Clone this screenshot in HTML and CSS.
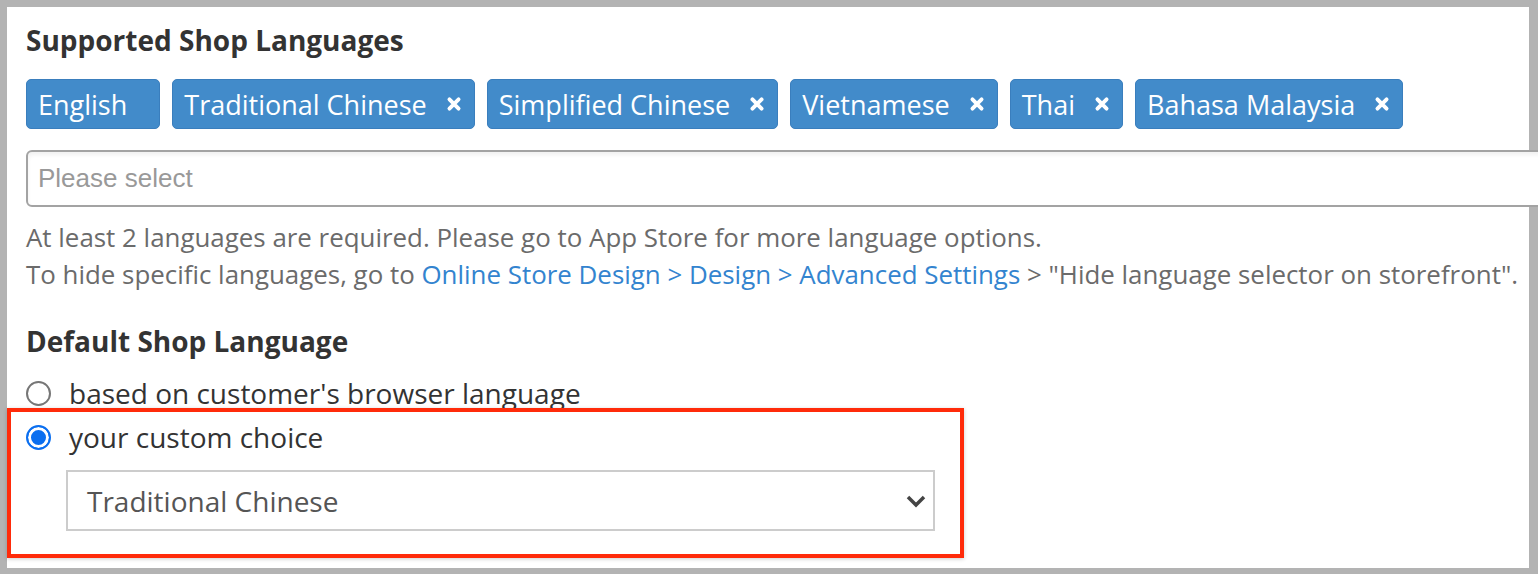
FILE: index.html
```html
<!DOCTYPE html>
<html lang="en">
<head>
    <meta charset="UTF-8">
    <meta name="viewport" content="width=device-width, initial-scale=1.0">
    <title>Shop Languages</title>
    <link rel="stylesheet" href="styles.css">
</head>
<body>

    <div class="panel">
        <!-- Supported languages -->
        <h3 class="section-title">Supported Shop Languages</h3>
        <div class="tag-list">
            <span class="tag tag-fixed">English</span>
            <span class="tag">Traditional Chinese <span class="tag-remove"><svg viewBox="0 0 14 14"><path d="M3 3 L11 11 M11 3 L3 11"/></svg></span></span>
            <span class="tag">Simplified Chinese <span class="tag-remove"><svg viewBox="0 0 14 14"><path d="M3 3 L11 11 M11 3 L3 11"/></svg></span></span>
            <span class="tag">Vietnamese <span class="tag-remove"><svg viewBox="0 0 14 14"><path d="M3 3 L11 11 M11 3 L3 11"/></svg></span></span>
            <span class="tag">Thai <span class="tag-remove"><svg viewBox="0 0 14 14"><path d="M3 3 L11 11 M11 3 L3 11"/></svg></span></span>
            <span class="tag">Bahasa Malaysia <span class="tag-remove"><svg viewBox="0 0 14 14"><path d="M3 3 L11 11 M11 3 L3 11"/></svg></span></span>
        </div>
        <input type="text" class="search-input" placeholder="Please select">
        <p class="help-text">
            At least 2 languages are required. Please go to App Store for more language options.<br>
            To hide specific languages, go to <a href="#">Online Store Design &gt; Design &gt; Advanced Settings</a> &gt; "Hide language selector on storefront".
        </p>

        <!-- Default language -->
        <h3 class="section-title default-title">Default Shop Language</h3>
        <label class="radio-row first-row">
            <input type="radio" name="defaultLang">
            <span>based on customer's browser language</span>
        </label>
        <div class="highlight">
            <label class="radio-row">
                <input type="radio" name="defaultLang" checked>
                <span>your custom choice</span>
            </label>
            <div class="select-box">
                <span>Traditional Chinese</span>
                <svg class="chevron" viewBox="0 0 22 14"><path d="M3 3 L11 11 L19 3"/></svg>
            </div>
        </div>
    </div>

</body>
</html>
```

FILE: styles.css
```css
html, body {
    margin: 0;
    padding: 0;
    overflow: hidden;
}
body {
    font-family: "Open Sans", Arial, sans-serif;
    background-color: #b3b3b3;
    color: #333;
    height: 574px;
    box-sizing: border-box;
    padding: 7px 9px 6px 7px;
}
.panel {
    background-color: #fff;
    height: 561px;
    padding: 15px 0 0 19px;
    box-sizing: border-box;
}
.section-title {
    margin: 0;
    font-size: 28px;
    font-weight: 700;
    line-height: 36px;
    color: #333;
}
.tag-list {
    display: flex;
    gap: 12px;
    margin-top: 21px;
}
.tag {
    display: flex;
    align-items: center;
    height: 50px;
    box-sizing: border-box;
    padding: 0 12px 0 11px;
    background-color: #428bca;
    border: 1px solid #3a7ebd;
    border-radius: 5px;
    color: #fff;
    font-size: 27px;
    font-weight: 400;
    white-space: pre;
}
.tag-fixed {
    padding-right: 32px;
}
.tag-remove {
    display: flex;
    margin-left: 12px;
}
.tag-remove svg {
    width: 16px;
    height: 16px;
    stroke: #fff;
    stroke-width: 3.4;
    stroke-linecap: round;
    fill: none;
}
.search-input {
    display: block;
    margin-top: 21px;
    width: 1540px;
    height: 57px;
    box-sizing: border-box;
    padding: 0 10px;
    border: 2px solid #a3a3a3;
    border-radius: 6px;
    box-shadow: inset 0 3px 4px rgba(0, 0, 0, 0.06);
    font-family: "Liberation Sans", Arial, sans-serif;
    font-size: 26px;
    color: #555;
    outline: none;
}
.search-input::placeholder {
    color: #999;
}
.help-text {
    margin: 12px 0 0;
    font-size: 25.9px;
    line-height: 37px;
    color: #6b6b6b;
}
.help-text a {
    color: #3384cf;
    text-decoration: none;
}
.default-title {
    margin-top: 30px;
}
.radio-row {
    display: flex;
    align-items: center;
    height: 44px;
    font-size: 28px;
    color: #333;
    cursor: pointer;
}
.first-row {
    margin-top: 12px;
    margin-bottom: -7px;
}
.radio-row input {
    appearance: none;
    -webkit-appearance: none;
    margin: 0 18px 0 0;
    width: 25px;
    height: 25px;
    border: 2px solid #767676;
    border-radius: 50%;
    box-sizing: border-box;
    background: #fff;
}
.radio-row input:checked {
    border: 2px solid #0b6ff0;
    box-shadow: inset 0 0 0 3px #fff;
    background: #0b6ff0;
}
.highlight {
    position: relative;
    margin-left: -19px;
    width: 957px;
    box-sizing: border-box;
    border: 4px solid #ff2b0a;
    padding: 3px 0 23px 15px;
    box-shadow: 0 1px 4px rgba(0, 0, 0, 0.2);
}
.select-box {
    display: flex;
    align-items: center;
    justify-content: space-between;
    margin: 11px 0 0 40px;
    width: 869px;
    height: 61px;
    box-sizing: border-box;
    border: 2px solid #ccc;
    padding: 0 6px 0 19px;
    font-size: 28px;
    color: #555;
}
.chevron {
    width: 22px;
    height: 14px;
    stroke: #444;
    stroke-width: 3.5;
    fill: none;
}
```
